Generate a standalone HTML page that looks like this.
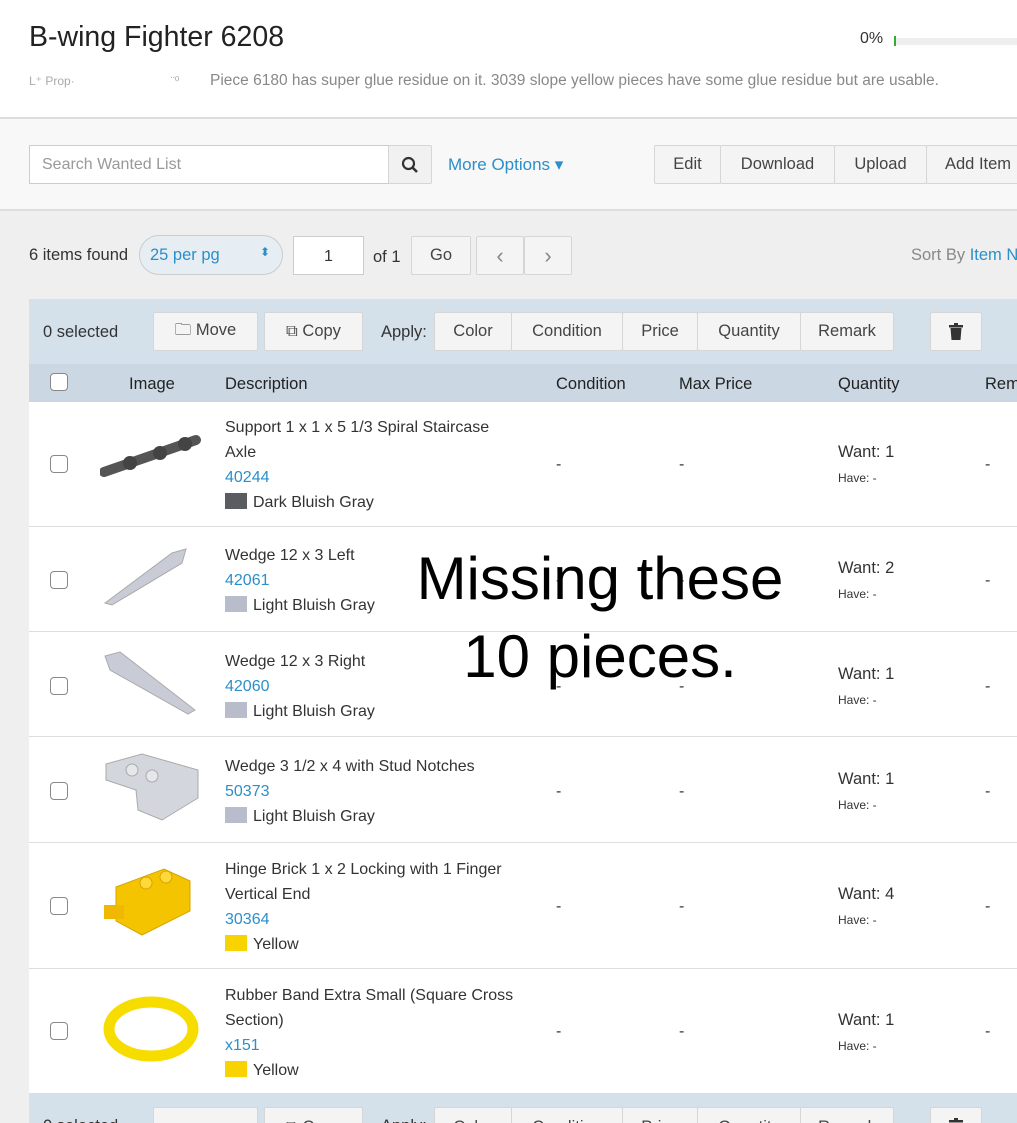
<!DOCTYPE html>
<html><head><meta charset="utf-8"><style>
*{box-sizing:border-box;margin:0;padding:0}
html,body{width:1017px;height:1123px;overflow:hidden}
body{background:#fff;font-family:"Liberation Sans",sans-serif;color:#333;position:relative}
.a{position:absolute;white-space:nowrap}
.btn{position:absolute;background:#f4f4f4;border:1px solid #d6d6d6;border-radius:2px;font-size:16.5px;color:#444;display:flex;align-items:center;justify-content:center;overflow:hidden}
.blue{color:#2b8fc9}
.cb{position:absolute;width:18px;height:18px;border:1.5px solid #888;border-radius:4px;background:#fff}
.sw{display:inline-block;width:22px;height:16px;vertical-align:-2px;margin-right:6px}
.row{position:absolute;left:29px;width:988px;background:#fff;border-bottom:1px solid #ddd}
.t{font-size:16px;line-height:25px;color:#333}
</style></head><body>
<div class="a" style="left:29px;top:21px;font-size:28.5px;color:#222">B-wing Fighter 6208</div>
<div class="a" style="left:860px;top:30px;font-size:16px">0%</div>
<div class="a" style="left:894px;top:36px;width:2px;height:10px;background:#3a3"></div>
<div class="a" style="left:896px;top:38px;width:121px;height:7px;background:#eee"></div>
<div class="a" style="left:29px;top:72px;font-size:15.5px;color:#888"><span style="color:#aaa;font-size:12px;display:inline-block;width:181px">L⁺ Prop·<span style="margin-left:96px">¨⁰</span></span>Piece 6180 has super glue residue on it. 3039 slope yellow pieces have some glue residue but are usable.</div>
<div class="a" style="left:0;top:117px;width:1017px;height:94px;background:#f8f8f8;border-top:2px solid #ddd;border-bottom:2px solid #ddd"></div>
<div class="a" style="left:29px;top:145px;width:360px;height:39px;background:#fff;border:1px solid #ccc;font-size:16px;color:#999;padding:10px 12px">Search Wanted List</div>
<div class="btn" style="left:388px;top:145px;width:44px;height:39px;background:#f1f1f1"><svg width="18" height="18" viewBox="0 0 18 18"><circle cx="7.5" cy="7.5" r="5.5" fill="none" stroke="#333" stroke-width="2.2"/><path d="M11.5 11.5L16 16" stroke="#333" stroke-width="2.6"/></svg></div>
<div class="a blue" style="left:448px;top:155px;font-size:17px">More Options ▾</div>
<div class="btn" style="left:654px;top:145px;width:67px;height:39px">Edit</div>
<div class="btn" style="left:720px;top:145px;width:115px;height:39px">Download</div>
<div class="btn" style="left:834px;top:145px;width:93px;height:39px">Upload</div>
<div class="btn" style="left:926px;top:145px;width:100px;height:39px;justify-content:flex-start;padding-left:18px">Add Item</div>
<div class="a" style="left:0;top:211px;width:1017px;height:912px;background:#efefef"></div>
<div class="a" style="left:29px;top:246px;font-size:16.5px">6 items found</div>
<div class="a blue" style="left:139px;top:235px;width:144px;height:40px;border:1px solid #ccc;border-radius:20px;background:#e6eef4;font-size:16.5px;padding:10px 10px"><span>25 per pg</span><span style="position:absolute;right:12px;top:9px;font-size:12px">⬍</span></div>
<div class="a" style="left:293px;top:236px;width:71px;height:39px;background:#fff;border:1px solid #ccc;font-size:16px;text-align:center;line-height:39px">1</div>
<div class="a" style="left:373px;top:248px;font-size:16.5px">of 1</div>
<div class="btn" style="left:411px;top:236px;width:60px;height:39px">Go</div>
<div class="btn" style="left:476px;top:236px;width:48px;height:39px;color:#888;font-size:22px">‹</div>
<div class="btn" style="left:524px;top:236px;width:48px;height:39px;color:#888;font-size:22px">›</div>
<div class="a" style="left:911px;top:246px;font-size:16.5px;color:#888">Sort By <span class="blue">Item N</span></div>
<div class="a" style="left:29px;top:299px;width:988px;height:65px;background:#d5e1ea"></div>
<div class="a" style="left:43px;top:323px;font-size:16.5px">0 selected</div>
<div class="btn" style="left:153px;top:312px;width:105px;height:39px">🗀&nbsp;Move</div>
<div class="btn" style="left:264px;top:312px;width:99px;height:39px">⧉&nbsp;Copy</div>
<div class="a" style="left:381px;top:323px;font-size:16.5px">Apply:</div>
<div class="btn" style="left:434px;top:312px;width:78px;height:39px">Color</div>
<div class="btn" style="left:511px;top:312px;width:112px;height:39px">Condition</div>
<div class="btn" style="left:622px;top:312px;width:76px;height:39px">Price</div>
<div class="btn" style="left:697px;top:312px;width:104px;height:39px">Quantity</div>
<div class="btn" style="left:800px;top:312px;width:94px;height:39px">Remark</div>
<div class="btn" style="left:930px;top:312px;width:52px;height:39px"><svg width="14" height="17" viewBox="0 0 14 17"><rect x="0" y="2" width="14" height="2.5" fill="#333"/><rect x="5" y="0" width="4" height="2" fill="#333"/><path d="M1.5 5h11l-1 12h-9z" fill="#333"/></svg></div>
<div class="a" style="left:29px;top:364px;width:988px;height:38px;background:#cbd8e3"></div>
<div class="cb" style="left:50px;top:373px"></div>
<div class="a" style="left:129px;top:375px;font-size:16.5px;color:#222">Image</div>
<div class="a" style="left:225px;top:375px;font-size:16.5px;color:#222">Description</div>
<div class="a" style="left:556px;top:375px;font-size:16.5px;color:#222">Condition</div>
<div class="a" style="left:679px;top:375px;font-size:16.5px;color:#222">Max Price</div>
<div class="a" style="left:838px;top:375px;font-size:16.5px;color:#222">Quantity</div>
<div class="a" style="left:985px;top:375px;font-size:16.5px;color:#222">Rem</div>

<div class="row" style="top:402px;height:125px"></div>
<div class="row" style="top:527px;height:105px"></div>
<div class="row" style="top:632px;height:105px"></div>
<div class="row" style="top:737px;height:106px"></div>
<div class="row" style="top:843px;height:126px"></div>
<div class="row" style="top:969px;height:125px"></div>

<div class="cb" style="left:50px;top:455px"></div>
<svg class="a" style="left:100px;top:432px" width="102" height="50"><path d="M4 40 L96 8" stroke="#555" stroke-width="10" stroke-linecap="round"/><circle cx="30" cy="31" r="7" fill="#444"/><circle cx="60" cy="21" r="7" fill="#444"/><circle cx="85" cy="12" r="7" fill="#444"/></svg>
<div class="a t" style="left:225px;top:415px">Support 1 x 1 x 5 1/3 Spiral Staircase<br>Axle<br><span class="blue">40244</span><br><span class="sw" style="background:#595d60"></span>Dark Bluish Gray</div>
<div class="a" style="left:556px;top:456px">-</div><div class="a" style="left:679px;top:456px">-</div><div class="a" style="left:985px;top:456px">-</div>
<div class="a" style="left:838px;top:443px;font-size:16.5px">Want: 1</div><div class="a" style="left:838px;top:471px;font-size:12px">Have: -</div>

<div class="cb" style="left:50px;top:571px"></div>
<svg class="a" style="left:100px;top:545px" width="90" height="62"><path d="M5 58 L72 8 L86 4 L82 18 L12 60z" fill="#c9ccd6" stroke="#aaa"/></svg>
<div class="a t" style="left:225px;top:543px">Wedge 12 x 3 Left<br><span class="blue">42061</span><br><span class="sw" style="background:#b8bccb"></span>Light Bluish Gray</div>
<div class="a" style="left:556px;top:572px">-</div><div class="a" style="left:679px;top:572px">-</div><div class="a" style="left:985px;top:572px">-</div>
<div class="a" style="left:838px;top:559px;font-size:16.5px">Want: 2</div><div class="a" style="left:838px;top:587px;font-size:12px">Have: -</div>

<div class="cb" style="left:50px;top:677px"></div>
<svg class="a" style="left:100px;top:650px" width="100" height="66"><path d="M5 6 L20 2 L95 60 L88 64 L10 20z" fill="#c9ccd6" stroke="#aaa"/></svg>
<div class="a t" style="left:225px;top:649px">Wedge 12 x 3 Right<br><span class="blue">42060</span><br><span class="sw" style="background:#b8bccb"></span>Light Bluish Gray</div>
<div class="a" style="left:556px;top:678px">-</div><div class="a" style="left:679px;top:678px">-</div><div class="a" style="left:985px;top:678px">-</div>
<div class="a" style="left:838px;top:665px;font-size:16.5px">Want: 1</div><div class="a" style="left:838px;top:693px;font-size:12px">Have: -</div>

<div class="cb" style="left:50px;top:782px"></div>
<svg class="a" style="left:102px;top:750px" width="98" height="72"><path d="M4 14 L40 4 L96 20 L96 48 L60 70 L36 60 L34 40 L4 30z" fill="#d4d6dd" stroke="#aaa"/><circle cx="30" cy="20" r="6" fill="#e6e7eb" stroke="#aaa"/><circle cx="50" cy="26" r="6" fill="#e6e7eb" stroke="#aaa"/></svg>
<div class="a t" style="left:225px;top:754px">Wedge 3 1/2 x 4 with Stud Notches<br><span class="blue">50373</span><br><span class="sw" style="background:#b8bccb"></span>Light Bluish Gray</div>
<div class="a" style="left:556px;top:783px">-</div><div class="a" style="left:679px;top:783px">-</div><div class="a" style="left:985px;top:783px">-</div>
<div class="a" style="left:838px;top:770px;font-size:16.5px">Want: 1</div><div class="a" style="left:838px;top:798px;font-size:12px">Have: -</div>

<div class="cb" style="left:50px;top:897px"></div>
<svg class="a" style="left:102px;top:865px" width="90" height="74"><path d="M14 22 L62 4 L88 16 L88 46 L40 70 L14 56z" fill="#f5c400" stroke="#d8a400"/><circle cx="44" cy="18" r="6" fill="#ffd93a" stroke="#d8a400"/><circle cx="64" cy="12" r="6" fill="#ffd93a" stroke="#d8a400"/><rect x="2" y="40" width="20" height="14" fill="#f0b800"/></svg>
<div class="a t" style="left:225px;top:857px">Hinge Brick 1 x 2 Locking with 1 Finger<br>Vertical End<br><span class="blue">30364</span><br><span class="sw" style="background:#f9d300"></span>Yellow</div>
<div class="a" style="left:556px;top:898px">-</div><div class="a" style="left:679px;top:898px">-</div><div class="a" style="left:985px;top:898px">-</div>
<div class="a" style="left:838px;top:885px;font-size:16.5px">Want: 4</div><div class="a" style="left:838px;top:913px;font-size:12px">Have: -</div>

<div class="cb" style="left:50px;top:1022px"></div>
<svg class="a" style="left:102px;top:995px" width="98" height="68"><ellipse cx="49" cy="34" rx="42" ry="27" fill="none" stroke="#f7dc00" stroke-width="11"/></svg>
<div class="a t" style="left:225px;top:983px">Rubber Band Extra Small (Square Cross<br>Section)<br><span class="blue">x151</span><br><span class="sw" style="background:#f9d300"></span>Yellow</div>
<div class="a" style="left:556px;top:1023px">-</div><div class="a" style="left:679px;top:1023px">-</div><div class="a" style="left:985px;top:1023px">-</div>
<div class="a" style="left:838px;top:1011px;font-size:16.5px">Want: 1</div><div class="a" style="left:838px;top:1039px;font-size:12px">Have: -</div>

<div class="a" style="left:29px;top:1094px;width:988px;height:29px;background:#d5e1ea"></div>
<div class="a" style="left:43px;top:1117px;font-size:16.5px">0 selected</div>
<div class="btn" style="left:153px;top:1107px;width:105px;height:39px;align-items:flex-start;padding-top:10px">🗀&nbsp;Move</div>
<div class="btn" style="left:264px;top:1107px;width:99px;height:39px;align-items:flex-start;padding-top:10px">⧉&nbsp;Copy</div>
<div class="a" style="left:381px;top:1117px;font-size:16.5px">Apply:</div>
<div class="btn" style="left:434px;top:1107px;width:78px;height:39px;align-items:flex-start;padding-top:10px">Color</div>
<div class="btn" style="left:511px;top:1107px;width:112px;height:39px;align-items:flex-start;padding-top:10px">Condition</div>
<div class="btn" style="left:622px;top:1107px;width:76px;height:39px;align-items:flex-start;padding-top:10px">Price</div>
<div class="btn" style="left:697px;top:1107px;width:104px;height:39px;align-items:flex-start;padding-top:10px">Quantity</div>
<div class="btn" style="left:800px;top:1107px;width:94px;height:39px;align-items:flex-start;padding-top:10px">Remark</div>
<div class="btn" style="left:930px;top:1107px;width:52px;height:39px;align-items:flex-start;padding-top:10px"><svg width="14" height="17" viewBox="0 0 14 17"><rect x="0" y="2" width="14" height="2.5" fill="#333"/><rect x="5" y="0" width="4" height="2" fill="#333"/><path d="M1.5 5h11l-1 12h-9z" fill="#333"/></svg></div>

<div class="a" style="left:380px;top:540px;width:440px;text-align:center;font-size:60px;line-height:78px;color:#000">Missing these<br>10 pieces.</div>
</body></html>
